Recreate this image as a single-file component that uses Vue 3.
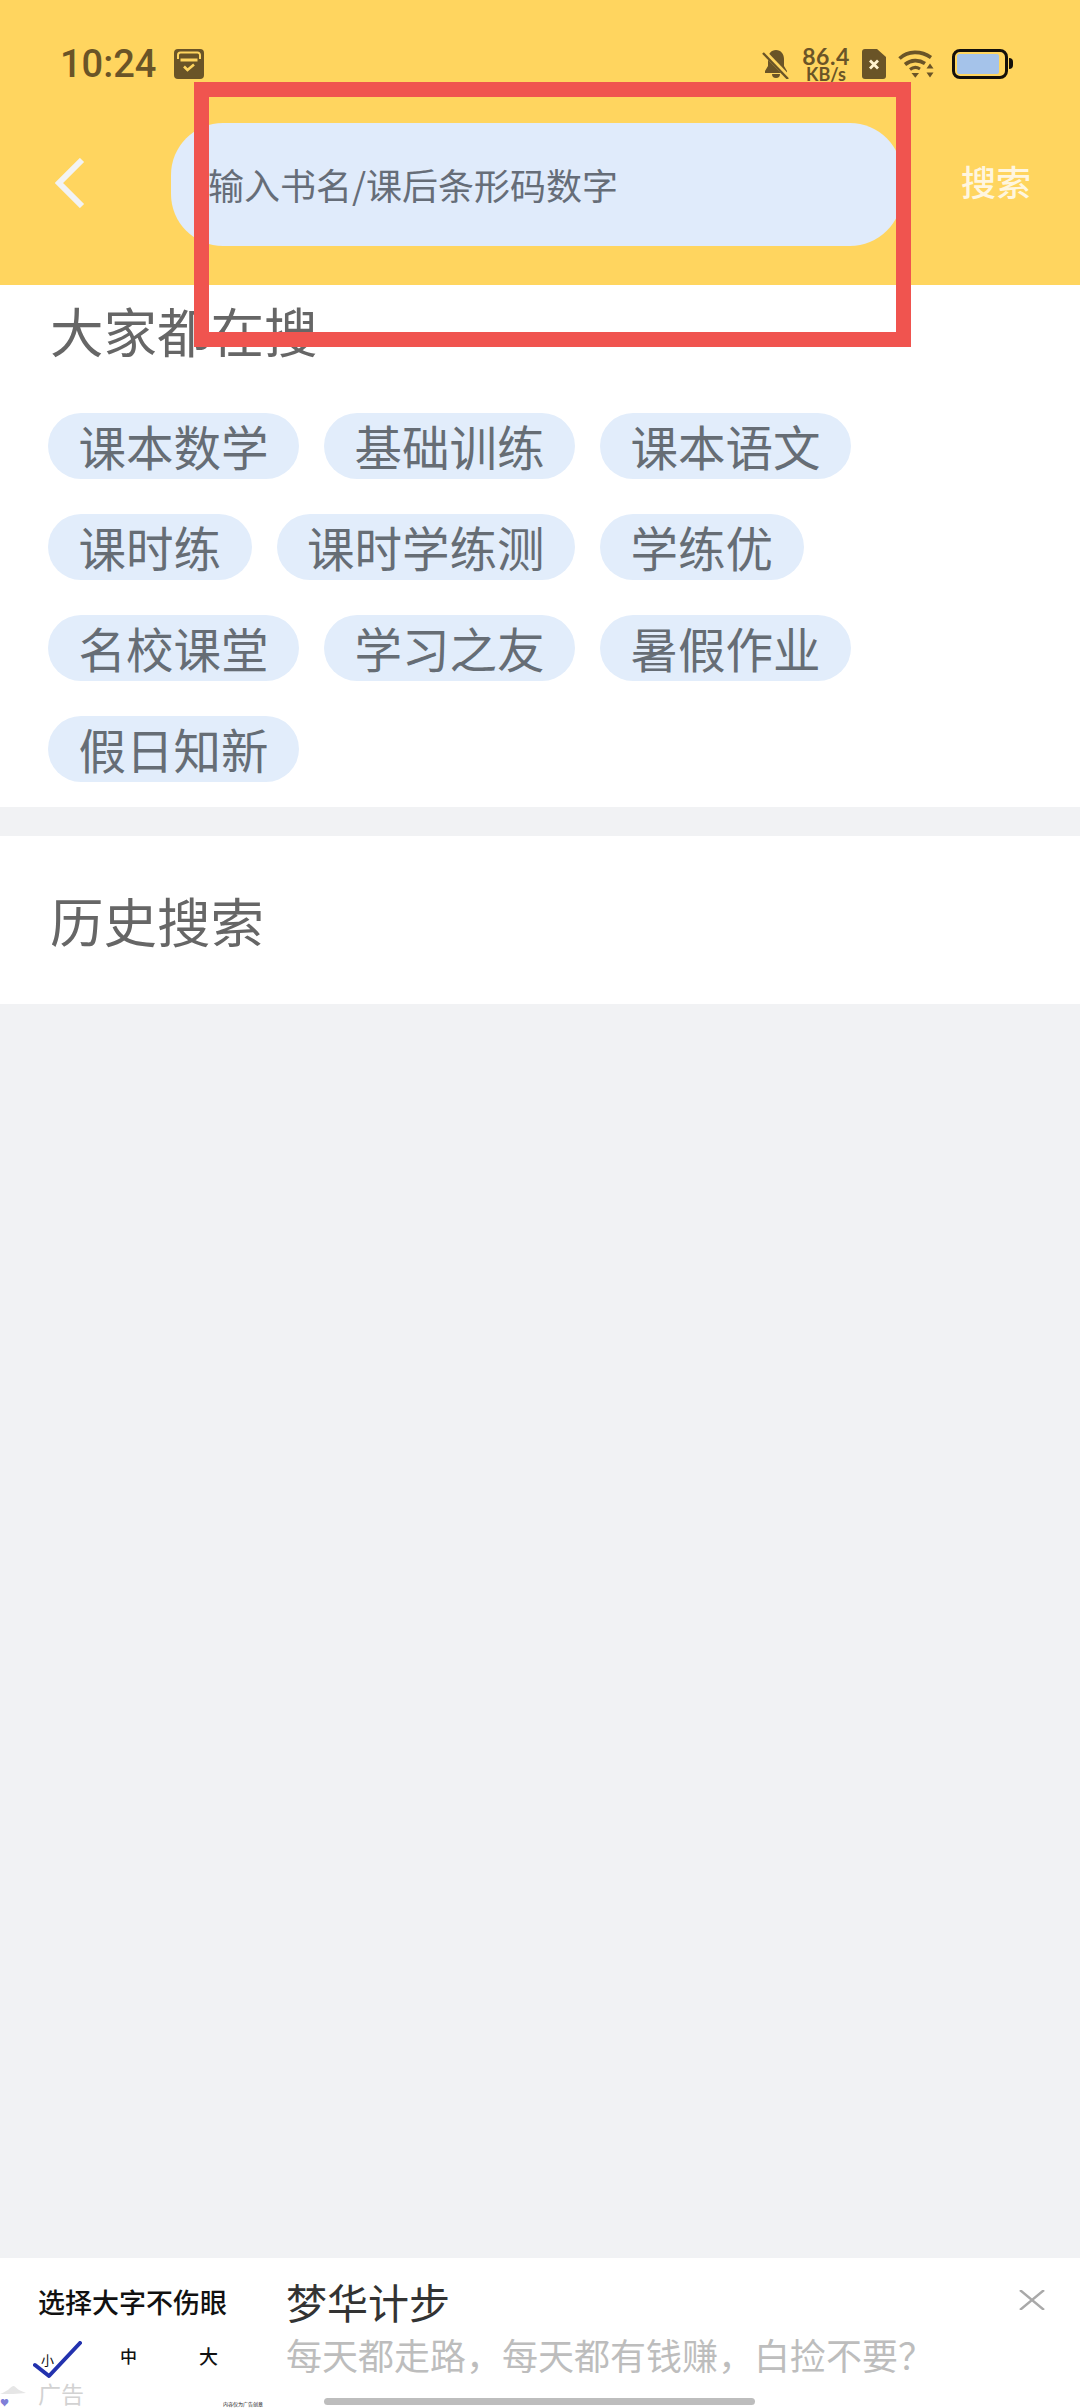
<template>
  <div class="page">
    <header class="top">
      <div class="status-bar">
        <div class="status-left">
          <span class="time">10:24</span>
          <svg class="icon-save" viewBox="0 0 30 30">
            <rect width="30" height="30" rx="4" fill="#6a5427" />
            <path d="M4 10V6a2.500 2.500 0 0 1 2.500-2.500h17A2.500 2.500 0 0 1 26 6v4" fill="none" stroke="#ffd55f" stroke-width="2" />
            <path d="M6.500 9.500h17v3h-17z" fill="#ffd55f" />
            <path d="M10 17.500l3.500 3.500 6.500-5.500" fill="none" stroke="#ffd55f" stroke-width="2.600" />
          </svg>
        </div>
        <div class="status-right">
          <svg class="icon-bell" viewBox="0 0 28 30">
            <path d="M14 1c5 0 8 4 8 9v7l3 5v2H3v-2l3-5v-7c0-5 3-9 8-9zM10 25h8a4 4 0 0 1-8 0z" fill="#6a5427" />
            <path d="M2 3l25 26" stroke="#ffd55f" stroke-width="5" />
            <path d="M1 4l25 26" stroke="#6a5427" stroke-width="2.400" />
          </svg>
          <div class="speed">
            <span class="speed-num">86.4</span>
            <span class="speed-unit">KB/s</span>
          </div>
          <svg class="icon-sim" viewBox="0 0 24 30">
            <path d="M3 0h12l9 8v19a3 3 0 0 1-3 3H3a3 3 0 0 1-3-3V3a3 3 0 0 1 3-3z" fill="#6a5427" />
            <path d="M8 11.500l8 8M16 11.500l-8 8" stroke="#fff3d0" stroke-width="2.800" />
          </svg>
          <svg class="icon-wifi" viewBox="0 0 37 29">
            <path d="M1.500 9.500C10 1.500 23 1.500 33 8.500" fill="none" stroke="#6a5427" stroke-width="3.600" />
            <path d="M7 15.500c6-5 14-5 20-1" fill="none" stroke="#6a5427" stroke-width="3.600" />
            <path d="M12 20.500c3-2.500 7-2.500 10-.5" fill="none" stroke="#6a5427" stroke-width="3" />
            <path d="M13.500 24h7.500l-3.700 4.800z" fill="#6a5427" />
            <path d="M32 14.500l3.500 5h-7zM32 28.500l-3.500-5h7z" fill="#6a5427" />
          </svg>
          <div class="battery">
            <div class="battery-body"><div class="battery-fill"></div></div>
            <div class="battery-tip"></div>
          </div>
        </div>
      </div>
      <div class="search-row">
        <svg class="icon-back" viewBox="0 0 30 50">
          <path d="M27 2L4 25l23 23" fill="none" stroke="#f2f3f4" stroke-width="6" />
        </svg>
        <div class="search-box">输入书名/课后条形码数字</div>
        <span class="search-btn">搜索</span>
      </div>
    </header>

    <section class="hot">
      <h2 class="title">大家都在搜</h2>
      <div class="tags">
        <span v-for="tag in tags" :key="tag" class="tag">{{ tag }}</span>
      </div>
    </section>

    <section class="history">
      <h2 class="title">历史搜索</h2>
    </section>

    <div class="filler"></div>

    <footer class="ad">
      <div class="ad-creative">
        <div class="ad-slogan">选择大字不伤眼</div>
        <div class="ad-sizes">
          <span class="size-s">小</span>
          <span class="size-m">中</span>
          <span class="size-l">大</span>
        </div>
        <div class="ad-mark">
          <svg class="icon-cloud" viewBox="0 0 26 10">
            <path d="M0 9c4-1 5-3 8-4 2-2 4-4 6-4 2 1 3 3 5 4 2 1 5 2 7 3-8 1-18 1-26 1z" fill="#e6e6e6" />
          </svg>
          <span class="ad-label">广告</span>
        </div>
      </div>
      <div class="ad-text">
        <div class="ad-title">梦华计步</div>
        <div class="ad-desc">每天都走路，每天都有钱赚，白捡不要？</div>
      </div>
      <svg class="icon-close" viewBox="0 0 26 20">
        <path d="M1 0l24 20M25 0L1 20" stroke="#a9a9a9" stroke-width="2.400" />
      </svg>
    </footer>

    <!-- overlays -->
    <div class="red-box"></div>
    <svg class="check" viewBox="0 0 50 38">
      <path d="M2 24l14 11L47 2" fill="none" stroke="#2332ae" stroke-width="4" stroke-linecap="round" stroke-linejoin="round" />
    </svg>
    <span class="heart">♥</span>
    <span class="ad-note">内容仅为广告创意</span>
    <div class="home-bar"></div>
  </div>
</template>

<script setup>
const tags = [
  "课本数学",
  "基础训练",
  "课本语文",
  "课时练",
  "课时学练测",
  "学练优",
  "名校课堂",
  "学习之友",
  "暑假作业",
  "假日知新",
];
</script>

<style>
html,
body {
  margin: 0;
  background: #f1f2f4;
}
</style>

<style scoped>
.page {
  position: relative;
  width: 1080px;
  height: 2408px;
  display: flex;
  flex-direction: column;
  overflow: hidden;
  background: #f1f2f4;
  font-family: "Noto Sans CJK SC", "Noto Sans", sans-serif;
}

.top {
  height: 285px;
  background: #ffd55f;
  box-sizing: border-box;
  padding-top: 47px;
}

.status-bar {
  height: 33px;
  display: flex;
  justify-content: space-between;
  align-items: center;
  padding: 0 67px 0 60px;
}

.status-left {
  display: flex;
  align-items: center;
}

.time {
  width: 114px;
  margin-top: 2px;
  font-family: Roboto, "Open Sans", sans-serif;
  font-size: 38px;
  font-weight: 500;
  line-height: 33px;
  color: #6a5427;
}

.icon-save {
  width: 30px;
  height: 30px;
}

.status-right {
  display: flex;
  align-items: center;
}

.icon-bell {
  width: 28px;
  height: 30px;
  margin-right: 11px;
}

.speed {
  width: 50px;
  display: flex;
  flex-direction: column;
  align-items: center;
  color: #6a5427;
  font-family: Lato, sans-serif;
  font-weight: 700;
}

.speed-num {
  font-size: 23px;
  line-height: 18px;
  letter-spacing: 0.5px;
}

.speed-unit {
  margin-top: 2px;
  font-size: 18px;
  line-height: 14px;
}

.icon-sim {
  width: 24px;
  height: 30px;
  margin-left: 11px;
}

.icon-wifi {
  width: 37px;
  height: 29px;
  margin-left: 12px;
}

.battery {
  display: flex;
  align-items: center;
  margin-left: 17px;
}

.battery-body {
  width: 56px;
  height: 30px;
  box-sizing: border-box;
  border: 3px solid #14100a;
  border-radius: 8px;
  padding: 2px 6px 2px 2px;
}

.battery-fill {
  height: 100%;
  background: #a5c3ea;
  border-radius: 2px;
}

.battery-tip {
  width: 4px;
  height: 11px;
  margin-left: 1px;
  background: #14100a;
  border-radius: 0 4px 4px 0;
}

.search-row {
  display: flex;
  align-items: center;
  margin-top: 43px;
  padding-left: 55px;
}

.icon-back {
  width: 30px;
  height: 50px;
  margin-top: -4px;
}

.search-box {
  width: 731px;
  height: 123px;
  margin-left: 86px;
  padding-left: 37px;
  box-sizing: border-box;
  background: #e0ebfb;
  border-radius: 52px;
  font-size: 36px;
  line-height: 123px;
  color: #666d78;
}

.search-btn {
  margin-left: 59px;
  margin-top: -8px;
  font-size: 35px;
  font-weight: 500;
  color: #fff6df;
}

.hot {
  background: #fff;
  padding: 15px 40px 25px 48px;
}

.title {
  margin: 0;
  font-size: 53.500px;
  font-weight: 400;
  line-height: 60px;
  color: #666;
}

.hot .title {
  padding-left: 2px;
}

.tags {
  display: flex;
  flex-wrap: wrap;
  gap: 35px 25px;
  margin-top: 53px;
}

.tag {
  height: 66px;
  padding: 0 30.500px;
  background: #e2edfb;
  border-radius: 33px;
  font-size: 47.500px;
  line-height: 66px;
  color: #666d75;
}

.history {
  margin-top: 29px;
  padding: 54px 50px 54px;
  background: #fff;
}

.filler {
  flex: 1;
}

.ad {
  height: 150px;
  display: flex;
  background: #fff;
}

.ad-creative {
  width: 286px;
  flex-shrink: 0;
  padding: 25px 0 0 38px;
  box-sizing: border-box;
  color: #111;
}

.ad-slogan {
  font-size: 27px;
  font-weight: 500;
  line-height: 38px;
}

.ad-sizes {
  position: relative;
  height: 32px;
  margin-top: 22px;
}

.size-s {
  position: absolute;
  left: 3px;
  top: 9px;
  font-size: 13px;
  line-height: 16px;
}

.size-m {
  position: absolute;
  left: 82px;
  top: 3px;
  font-size: 17px;
  line-height: 20px;
  font-weight: 500;
}

.size-l {
  position: absolute;
  left: 161px;
  top: 3px;
  font-size: 19px;
  line-height: 20px;
  font-weight: 500;
}

.ad-mark {
  display: flex;
  align-items: center;
  margin: 5px 0 0 -38px;
}

.icon-cloud {
  width: 26px;
  height: 10px;
  margin: -7px 12px 0 0;
}

.ad-label {
  font-size: 23px;
  line-height: 26px;
  color: #d2d2d2;
}

.ad-text {
  flex: 1;
}

.ad-title {
  margin-top: 17px;
  font-size: 41px;
  line-height: 52px;
  color: #333;
}

.ad-desc {
  margin-top: 2px;
  font-size: 36px;
  line-height: 50px;
  color: #bdbdbd;
}

.icon-close {
  width: 26px;
  height: 20px;
  margin: 32px 35px 0 0;
}

.red-box {
  position: absolute;
  left: 194px;
  top: 82px;
  width: 717px;
  height: 265px;
  box-sizing: border-box;
  border: 15px solid #f0544f;
}

.check {
  position: absolute;
  left: 33px;
  top: 2341px;
  width: 50px;
  height: 38px;
}

.heart {
  position: absolute;
  left: 0;
  top: 2398px;
  font-size: 9px;
  line-height: 10px;
  color: #7f7fd8;
}

.ad-note {
  position: absolute;
  left: 223px;
  top: 2400px;
  font-size: 5px;
  line-height: 7px;
  color: #222;
}

.home-bar {
  position: absolute;
  left: 324px;
  top: 2398px;
  width: 431px;
  height: 7px;
  background: #bdbdbd;
  border-radius: 4px;
}
</style>
